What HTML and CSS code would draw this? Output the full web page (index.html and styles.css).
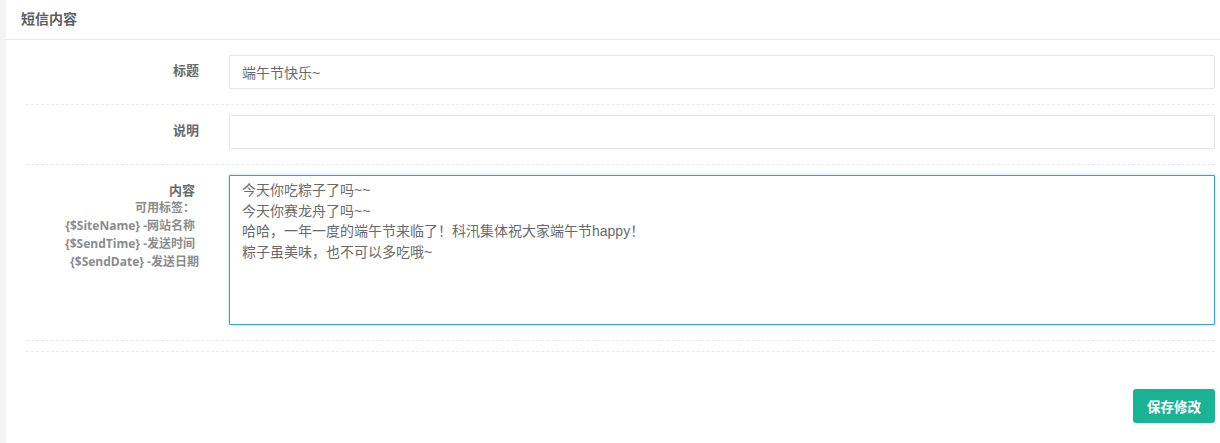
FILE: index.html
```html
<!DOCTYPE html>
<html lang="zh-CN">

<head>
  <meta charset="UTF-8" />
  <title>短信内容</title>
  <link rel="stylesheet" href="styles.css">
</head>

<body>

  <div class="ibox">
    <div class="ibox-title">短信内容</div>
    <form class="ibox-content">

      <div class="form-group">
        <label class="control-label" for="title">标题</label>
        <input class="form-control" type="text" id="title" value="端午节快乐~" />
      </div>
      <div class="hr-line-dashed"></div>

      <div class="form-group">
        <label class="control-label" for="desc">说明</label>
        <input class="form-control" type="text" id="desc" value="" />
      </div>
      <div class="hr-line-dashed"></div>

      <div class="form-group">
        <label class="control-label spaced" for="content">
          内容
          <span class="tags">
            <span class="tag">可用标签：</span>
            <span class="tag">{$SiteName} -网站名称</span>
            <span class="tag">{$SendTime} -发送时间</span>
            <span class="tag last">{$SendDate} -发送日期</span>
          </span>
        </label>
        <textarea class="form-control focus" id="content">今天你吃粽子了吗~~
今天你赛龙舟了吗~~
哈哈，一年一度的端午节来临了！科汛集体祝大家端午节happy！
粽子虽美味，也不可以多吃哦~</textarea>
      </div>
      <div class="hr-line-dashed"></div>
      <div class="hr-line-dashed"></div>

      <div class="actions">
        <button type="submit" class="btn-primary">保存修改</button>
      </div>
    </form>
  </div>

</body>

</html>
```

FILE: styles.css
```css
* {
  margin: 0;
  padding: 0;
  box-sizing: border-box;
}

body {
  background-color: #f3f3f4;
  padding-left: 6px;
  font-family: "Open Sans", "Noto Sans CJK SC", sans-serif;
  font-size: 13px;
  color: #676a6c;
  overflow: hidden;
}

.ibox {
  background-color: #fff;
  min-height: 443px;
}

.ibox-title {
  height: 40px;
  padding: 8px 15px 0;
  border-bottom: 1px solid #e7eaec;
  font-size: 14px;
  font-weight: bold;
  color: #5c5e60;
}

.ibox-content {
  padding: 15px 5px 20px 20px;
}

.form-group {
  display: grid;
  grid-template-columns: 173px 1fr;
  column-gap: 30px;
  margin-bottom: 15px;
}

.control-label {
  text-align: right;
  font-weight: bold;
  padding-top: 6px;
  line-height: 18px;
}

.control-label.spaced {
  padding-right: 4px;
}

.tags {
  display: block;
  font-size: 12px;
  color: #8a8c8e;
}

.tag {
  display: block;
}

.tag.last {
  margin-right: -4px;
}

.form-control {
  display: block;
  width: 100%;
  height: 34px;
  padding: 6px 12px;
  border: 1px solid #e5e6e7;
  border-radius: 1px;
  font-family: "Liberation Sans", "Noto Sans CJK SC", sans-serif;
  font-size: 14px;
  color: #676a6c;
  background-color: #fff;
  outline: none;
}

textarea.form-control {
  height: 150px;
  padding: 4px 12px;
  line-height: 20.7px;
  resize: none;
}

.form-control.focus {
  border-color: #3a9de0;
  box-shadow: 0 0 2px rgba(58, 157, 224, 0.6);
}

.hr-line-dashed {
  border-top: 1px dashed #e7eaec;
  height: 1px;
  margin-bottom: 10px;
}

.actions {
  display: flex;
  justify-content: flex-end;
  padding-top: 27px;
}

.btn-primary {
  width: 82px;
  height: 34px;
  background-color: #1ab394;
  color: #fff;
  border: none;
  border-radius: 3px;
  font-family: inherit;
  font-size: 13.5px;
  font-weight: bold;
  cursor: pointer;
}
```
